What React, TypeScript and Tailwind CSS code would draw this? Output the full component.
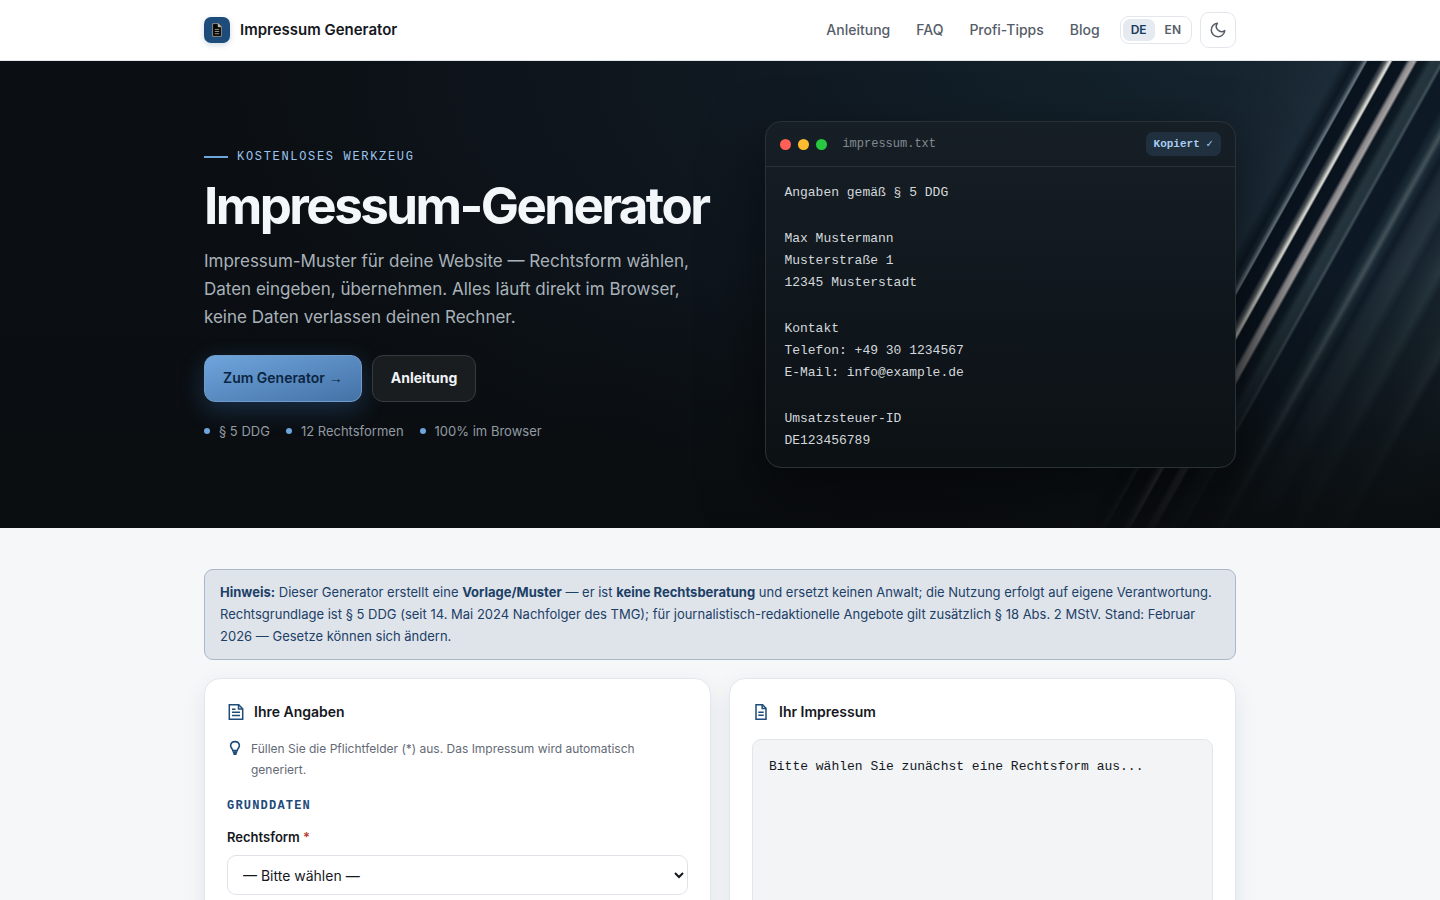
import React, { useState } from 'react';

const navLinks = [
  { label: 'Anleitung', href: '#anleitung' },
  { label: 'FAQ', href: '#faq' },
  { label: 'Profi-Tipps', href: '#profi-tipps' },
  { label: 'Blog', href: '#blog' },
];

const facts = ['§ 5 DDG', '12 Rechtsformen', '100% im Browser'];

const sampleBlocks = [
  ['Angaben gemäß § 5 DDG'],
  ['Max Mustermann', 'Musterstraße 1', '12345 Musterstadt'],
  ['Kontakt', 'Telefon: +49 30 1234567', 'E-Mail: info@example.de'],
  ['Umsatzsteuer-ID', 'DE123456789'],
];

const legalForms = ['Einzelunternehmen', 'Freiberufler', 'GbR', 'GmbH', 'UG (haftungsbeschränkt)', 'AG', 'e.V.'];

// [offset in the slanted coordinate system, colour]
const beams: [number, string][] = [
  [1342, '#1c2b38'],
  [1355, '#0d1822'],
  [1361, '#1a2834'],
  [1366, '#6b7880'],
  [1368, '#09131d'],
  [1381, '#0a1420'],
  [1386, '#565c5e'],
  [1390, '#deded8'],
  [1391, '#cfcfca'],
  [1393, '#09131d'],
  [1406, '#0a1420'],
  [1410, '#8b898b'],
  [1415, '#a8a3a3'],
  [1418, '#0b1620'],
  [1425, '#0d1a24'],
  [1432, '#26363f'],
  [1440, '#24343d'],
  [1443, '#42525a'],
  [1446, '#0d1925'],
  [1466, '#0d1925'],
  [1476, '#1d2e38'],
  [1482, '#46555c'],
  [1487, '#1c2c38'],
  [1496, '#0f1c28'],
  [1505, '#1f2d39'],
  [1522, '#26363f'],
  [1532, '#172530'],
  [1545, '#1e2d37'],
  [1558, '#283a41'],
  [1568, '#17242e'],
  [1590, '#1c2a33'],
  [1604, '#2c3c42'],
  [1612, '#15222b'],
  [1640, '#1c2930'],
  [1720, '#121b21'],
];

const LogoIcon = () => (
  <svg viewBox="0 0 10 14" className="h-[14px] w-[10px]" aria-hidden="true">
    <path d="M.6.6h5.900L9.400 3.600v9.800H.6z" fill="#050505" stroke="#a9a294" strokeWidth=".8" />
    <path d="M6.200.8v3h3" fill="#d8d2c4" stroke="#d8d2c4" strokeWidth=".7" />
    <path d="M2.800 6.400h4.400M2.800 8.500h4.400M2.800 10.700h4.400" stroke="#b8b2a6" strokeWidth=".8" />
  </svg>
);

const MoonIcon = () => (
  <svg viewBox="0 0 24 24" className="h-[18px] w-[18px]" fill="none" stroke="currentColor" strokeWidth="2" strokeLinecap="round" strokeLinejoin="round" aria-hidden="true">
    <path d="M21 12.79A9 9 0 1 1 11.21 3 7 7 0 0 0 21 12.79z" />
  </svg>
);

const FormIcon = () => (
  <svg viewBox="0 0 18 18" className="h-[18px] w-[18px]" fill="none" stroke="currentColor" strokeWidth="1.5" aria-hidden="true">
    <path d="M2.3 1.8h9.4l4 4v10.4H2.3z" />
    <path d="M11.5 1.8v4.3h4.2" />
    <path d="M5 6.2h3.5M5 9.2h8M5 12.6h8" />
  </svg>
);

const PageIcon = () => (
  <svg viewBox="0 0 18 18" className="h-[18px] w-[18px]" fill="none" stroke="currentColor" strokeWidth="1.5" aria-hidden="true">
    <path d="M4 1.8h6.6L14 5.2v11H4z" />
    <path d="M10.2 1.8v3.8H14" />
    <path d="M6.3 9.2h5.4M6.3 12.2h5.4" />
  </svg>
);

const BulbIcon = () => (
  <svg viewBox="0 0 16 16" className="h-4 w-4 shrink-0" fill="none" stroke="currentColor" aria-hidden="true">
    <path d="M5.8 10.6c0-1.5-2.200-2.300-2.200-5A4.400 4.400 0 0 1 8 1.600a4.400 4.400 0 0 1 4.400 4c0 2.700-2.200 3.500-2.200 5z" strokeWidth="1.6" />
    <path d="M5.800 12.300h4.400M6.400 14.100h3.200" strokeWidth="2" />
  </svg>
);

const HeroBackdrop = () => (
  <div className="pointer-events-none absolute inset-0" aria-hidden="true">
    <div className="absolute inset-0 bg-[radial-gradient(ellipse_70%_110%_at_85%_0%,#14242e_0%,#101922_45%,#0b0f13_100%)]" />
    <svg viewBox="0 0 1440 467" preserveAspectRatio="xMaxYMin slice" className="absolute inset-0 h-full w-full">
      <defs>
        <linearGradient id="beams" gradientUnits="userSpaceOnUse" x1="1180" x2="1720" y1="0" y2="0">
          <stop offset="0" stopColor="#14222c" stopOpacity="0" />
          {beams.map(([x, color]) => (
            <stop key={x} offset={(x - 1180) / 540} stopColor={color} />
          ))}
        </linearGradient>
        <linearGradient id="fade" x1="0" x2="0" y1="0" y2="1">
          <stop offset="0" stopColor="#0a0e12" stopOpacity="0" />
          <stop offset=".45" stopColor="#0a0e12" stopOpacity=".06" />
          <stop offset=".68" stopColor="#0a0e12" stopOpacity=".5" />
          <stop offset=".85" stopColor="#0a0e11" stopOpacity=".83" />
          <stop offset="1" stopColor="#0a0d10" stopOpacity=".96" />
        </linearGradient>
      </defs>
      <rect x="1180" width="540" height="467" fill="url(#beams)" transform="matrix(1 0 -0.56 1 0 0)" />
      <rect width="1440" height="467" fill="url(#fade)" />
    </svg>
  </div>
);

const Header: React.FC = () => {
  const [lang, setLang] = useState('DE');

  return (
    <header className="border-b border-[#e3e7ec] bg-white">
      <div className="mx-auto flex h-[60px] max-w-[1080px] items-center justify-between px-6">
        <a href="#" className="flex items-center gap-[10px] text-[15px] font-semibold text-[#15181d]">
          <span className="flex h-[26px] w-[26px] items-center justify-center rounded-[7px] bg-[#1d4b7a] shadow-[0_2px_6px_rgba(29,75,122,0.2)]">
            <LogoIcon />
          </span>
          Impressum Generator
        </a>
        <div className="flex items-center">
          <nav className="mr-5 flex gap-[26px] text-sm font-medium text-[#565d68]">
            {navLinks.map((link) => (
              <a key={link.label} href={link.href}>{link.label}</a>
            ))}
          </nav>
          <div className="mr-2 flex rounded-[9px] border border-[#e3e7ec] p-0.5">
            {['DE', 'EN'].map((code) => (
              <button
                key={code}
                type="button"
                onClick={() => setLang(code)}
                className={`h-[22px] rounded-[7px] px-2 text-xs font-semibold ${lang === code ? 'bg-[#e5eaf0] text-[#173a5e]' : 'ml-0.5 text-[#565d68]'}`}
              >
                {code}
              </button>
            ))}
          </div>
          <button
            type="button"
            aria-label="Farbschema wechseln"
            className="flex h-9 w-9 items-center justify-center rounded-[9px] border border-[#e3e7ec] text-[#565d68]"
          >
            <MoonIcon />
          </button>
        </div>
      </div>
    </header>
  );
};

const PreviewCard = () => (
  <div className="overflow-hidden rounded-2xl border border-[#2a3238] bg-linear-to-b from-[#171f26] via-[#10171d] to-[#0c1114] font-['Liberation_Mono',monospace] shadow-[0_24px_60px_rgba(0,0,0,0.5)]">
    <div className="flex h-[45px] items-center border-b border-[#2a3238] px-[14px]">
      <div className="flex gap-[7px]">
        <span className="h-[11px] w-[11px] rounded-full bg-[#ff5f57]" />
        <span className="h-[11px] w-[11px] rounded-full bg-[#febc2e]" />
        <span className="h-[11px] w-[11px] rounded-full bg-[#28c840]" />
      </div>
      <span className="ml-[15px] text-xs text-[#828a90]">impressum.txt</span>
      <button type="button" className="ml-auto h-6 rounded-[7px] bg-[#20303e] px-2 text-[11px] font-bold text-[#a9cdf2]">
        Kopiert ✓
      </button>
    </div>
    <div className="flex flex-col gap-6 px-[18px] py-[15px] text-[13px] leading-[22px] text-[#d3d8dc]">
      {sampleBlocks.map((lines) => (
        <div key={lines[0]}>
          {lines.map((line) => (
            <p key={line}>{line}</p>
          ))}
        </div>
      ))}
    </div>
  </div>
);

const Hero = () => (
  <section className="relative overflow-hidden bg-[#0b0f13]">
    <HeroBackdrop />
    <div className="relative mx-auto grid max-w-[1080px] grid-cols-1 items-center gap-12 px-6 py-[60px] md:grid-cols-[12fr_11fr]">
      <div>
        <p className="flex items-center gap-[9px] font-['Liberation_Mono',monospace] text-xs leading-[18px] tracking-[0.14em] text-[#9cc4ec]">
          <span className="h-0.5 w-6 bg-[#6ea5dc]" />
          KOSTENLOSES WERKZEUG
        </p>
        <h1 className="mt-3 text-[51px] leading-[56px] font-bold tracking-tighter whitespace-nowrap text-[#f4f7fa]">
          Impressum-Generator
        </h1>
        <p className="mt-[13px] text-[17px] leading-[28px] text-[#a9b2b9]">
          Impressum-Muster für deine Website — Rechtsform wählen, Daten eingeben, übernehmen. Alles läuft direkt im Browser, keine Daten verlassen deinen Rechner.
        </p>
        <div className="mt-6 flex gap-[10px] text-sm">
          <a
            href="#generator"
            className="flex h-[47px] items-center gap-1 rounded-[11px] border border-[#6f9cca] bg-linear-to-br from-[#6fa5dd] to-[#4472a6] px-[18px] font-semibold text-[#0b2440] shadow-[0_8px_24px_rgba(60,120,190,0.3)]"
          >
            Zum Generator
            <span className="font-['Liberation_Sans',sans-serif] font-normal">→</span>
          </a>
          <a
            href="#anleitung"
            className="flex h-[47px] items-center rounded-[11px] border border-[#363b3f] bg-[#191d20] px-[18px] font-bold text-[#f1f4f6]"
          >
            Anleitung
          </a>
        </div>
        <ul className="mt-[18px] flex gap-4 text-[13px] leading-[22px] text-[#929ba2]">
          {facts.map((fact) => (
            <li key={fact} className="flex items-center gap-[9px]">
              <span className="h-1.5 w-1.5 rounded-full bg-[#6ea5dc]" />
              {fact}
            </li>
          ))}
        </ul>
      </div>
      <PreviewCard />
    </div>
  </section>
);

const Generator = () => (
  <main id="generator" className="mx-auto max-w-[1080px] px-6 pt-[41px]">
    <div className="rounded-[9px] border border-[#a9b7c7] bg-[#dfe4eb] px-[15px] pt-[11px] pb-3 text-[13px] leading-[22px] text-[#1c4066]">
      <strong>Hinweis:</strong> Dieser Generator erstellt eine <strong>Vorlage/Muster</strong> — er ist{' '}
      <strong>keine Rechtsberatung</strong> und ersetzt keinen Anwalt; die Nutzung erfolgt auf eigene Verantwortung.
      Rechtsgrundlage ist § 5 DDG (seit 14. Mai 2024 Nachfolger des TMG); für journalistisch-redaktionelle Angebote gilt
      zusätzlich § 18 Abs. 2 MStV. Stand: Februar 2026 — Gesetze können sich ändern.
    </div>

    <div className="mt-[18px] grid grid-cols-1 gap-[18px] md:grid-cols-2">
      {/* Eingabe */}
      <section className="rounded-2xl border border-[#e3e7ec] bg-white px-[22px] pt-[22px] pb-6 shadow-[0_8px_24px_rgba(20,40,70,0.08)]">
        <h2 className="flex items-center gap-[9px] text-sm leading-[22px] font-semibold text-[#15181d]">
          <span className="text-[#1d4b7a]"><FormIcon /></span>
          Ihre Angaben
        </h2>
        <div className="mt-[15px] flex gap-2 text-xs leading-[21px] text-[#636a75]">
          <span className="mt-0.5 text-[#1d4b7a]"><BulbIcon /></span>
          <p className="max-w-[420px]">Füllen Sie die Pflichtfelder (*) aus. Das Impressum wird automatisch generiert.</p>
        </div>
        <h3 className="mt-[17px] font-['Liberation_Mono',monospace] text-xs leading-[18px] font-bold tracking-widest text-[#1d4b7a]">
          GRUNDDATEN
        </h3>
        <label htmlFor="rechtsform" className="mt-3 block text-[13px] leading-[20px] font-semibold text-[#15181d]">
          Rechtsform <span className="text-[#b93a32]">*</span>
        </label>
        <select
          id="rechtsform"
          defaultValue=""
          className="mt-2 h-10 w-full rounded-[9px] border border-[#dfe3e8] bg-white px-[11px] text-sm text-[#15181d]"
        >
          <option value="">— Bitte wählen —</option>
          {legalForms.map((form) => (
            <option key={form} value={form}>{form}</option>
          ))}
        </select>
      </section>

      {/* Ausgabe */}
      <section className="rounded-2xl border border-[#e3e7ec] bg-white px-[22px] pt-[22px] pb-6 shadow-[0_8px_24px_rgba(20,40,70,0.08)]">
        <h2 className="flex items-center gap-[9px] text-sm leading-[22px] font-semibold text-[#15181d]">
          <span className="text-[#1d4b7a]"><PageIcon /></span>
          Ihr Impressum
        </h2>
        <pre className="mt-4 min-h-[400px] rounded-[9px] border border-[#e3e7ec] bg-[#f2f4f6] p-4 font-['Liberation_Mono',monospace] text-[13px] leading-[22px] whitespace-pre-wrap text-[#15181d]">
          Bitte wählen Sie zunächst eine Rechtsform aus...
        </pre>
      </section>
    </div>
  </main>
);

const App: React.FC = () => (
  <div className="min-h-screen bg-[#f5f7f9] font-[Inter,sans-serif]">
    <Header />
    <Hero />
    <Generator />
  </div>
);

export default App;
